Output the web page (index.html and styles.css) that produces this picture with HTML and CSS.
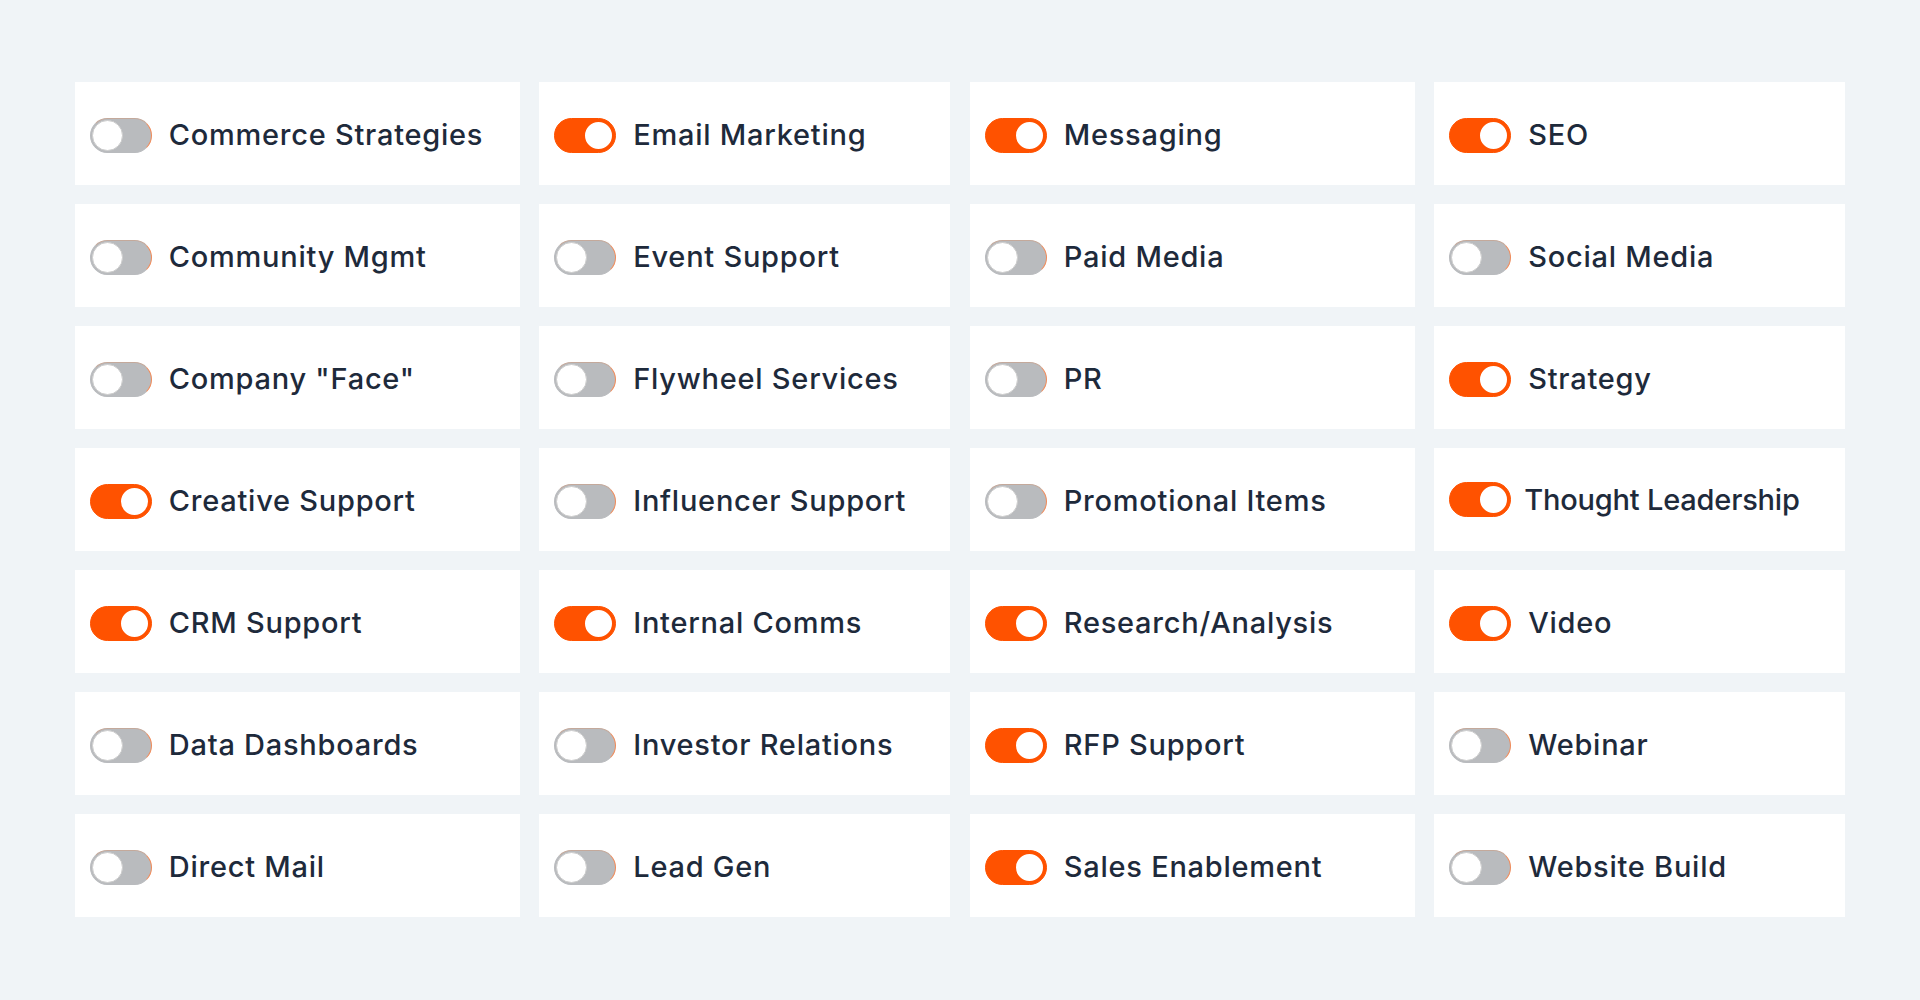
FILE: index.html
```html
<!DOCTYPE html>
<html lang="en">
<head>
  <meta charset="UTF-8" />
  <meta name="viewport" content="width=device-width, initial-scale=1.0" />
  <title>Services</title>
  <link rel="stylesheet" href="styles.css">
</head>
<body>
  <div class="services">
    <label class="item"><span class="toggle"></span><span class="name">Commerce Strategies</span></label>
    <label class="item"><span class="toggle"></span><span class="name">Community Mgmt</span></label>
    <label class="item"><span class="toggle"></span><span class="name">Company "Face"</span></label>
    <label class="item"><span class="toggle on"></span><span class="name">Creative Support</span></label>
    <label class="item"><span class="toggle on"></span><span class="name">CRM Support</span></label>
    <label class="item"><span class="toggle"></span><span class="name">Data Dashboards</span></label>
    <label class="item"><span class="toggle"></span><span class="name">Direct Mail</span></label>

    <label class="item"><span class="toggle on"></span><span class="name">Email Marketing</span></label>
    <label class="item"><span class="toggle"></span><span class="name">Event Support</span></label>
    <label class="item"><span class="toggle"></span><span class="name">Flywheel Services</span></label>
    <label class="item"><span class="toggle"></span><span class="name">Influencer Support</span></label>
    <label class="item"><span class="toggle on"></span><span class="name">Internal Comms</span></label>
    <label class="item"><span class="toggle"></span><span class="name">Investor Relations</span></label>
    <label class="item"><span class="toggle"></span><span class="name">Lead Gen</span></label>

    <label class="item"><span class="toggle on"></span><span class="name">Messaging</span></label>
    <label class="item"><span class="toggle"></span><span class="name">Paid Media</span></label>
    <label class="item"><span class="toggle"></span><span class="name">PR</span></label>
    <label class="item"><span class="toggle"></span><span class="name">Promotional Items</span></label>
    <label class="item"><span class="toggle on"></span><span class="name">Research/Analysis</span></label>
    <label class="item"><span class="toggle on"></span><span class="name">RFP Support</span></label>
    <label class="item"><span class="toggle on"></span><span class="name">Sales Enablement</span></label>

    <label class="item"><span class="toggle on"></span><span class="name">SEO</span></label>
    <label class="item"><span class="toggle"></span><span class="name">Social Media</span></label>
    <label class="item"><span class="toggle on"></span><span class="name">Strategy</span></label>
    <label class="item tight"><span class="toggle on"></span><span class="name">Thought Leadership</span></label>
    <label class="item"><span class="toggle on"></span><span class="name">Video</span></label>
    <label class="item"><span class="toggle"></span><span class="name">Webinar</span></label>
    <label class="item"><span class="toggle"></span><span class="name">Website Build</span></label>
  </div>
</body>
</html>
```

FILE: styles.css
```css
body {
  margin: 0;
  background-color: #f0f4f7;
  font-family: Inter, "Open Sans", sans-serif;
  color: #1e2a3b;
}
.services {
  display: grid;
  grid-auto-flow: column;
  grid-template-rows: repeat(7, 103px);
  grid-template-columns: 445px 411px 445px 411px;
  column-gap: 19.5px;
  row-gap: 19px;
  justify-content: center;
  padding: 82px 0 83px;
}
.item {
  display: flex;
  align-items: center;
  gap: 17px;
  padding: 0 15px;
  background-color: #fff;
}
.item.tight {
  gap: 13px;
}
.name {
  padding-top: 2px;
  font-size: 29px;
  font-weight: 500;
  letter-spacing: 0.75px;
  white-space: nowrap;
}
.tight .name {
  padding-top: 0;
  letter-spacing: -0.2px;
}
.toggle {
  position: relative;
  flex: none;
  width: 62px;
  height: 35px;
  margin-top: 3px;
  box-sizing: border-box;
  border-radius: 18px;
  background-color: #b9bbbe;
  border: 1px solid #b9bbbe;
  border-right-color: #f08a58;
  border-top-color: #c4a99b;
}
.tight .toggle {
  margin-top: 0;
}
.toggle::after {
  content: "";
  position: absolute;
  top: 1px;
  left: 1px;
  width: 31px;
  height: 31px;
  box-sizing: border-box;
  border-radius: 50%;
  background-color: #fff;
  border: 1px solid #cdcdcd;
}
.toggle.on {
  background-color: #ff5200;
  border-color: #ff5200;
}
.toggle.on::after {
  left: auto;
  right: 1px;
  border: 2px solid #ff5200;
}
```
